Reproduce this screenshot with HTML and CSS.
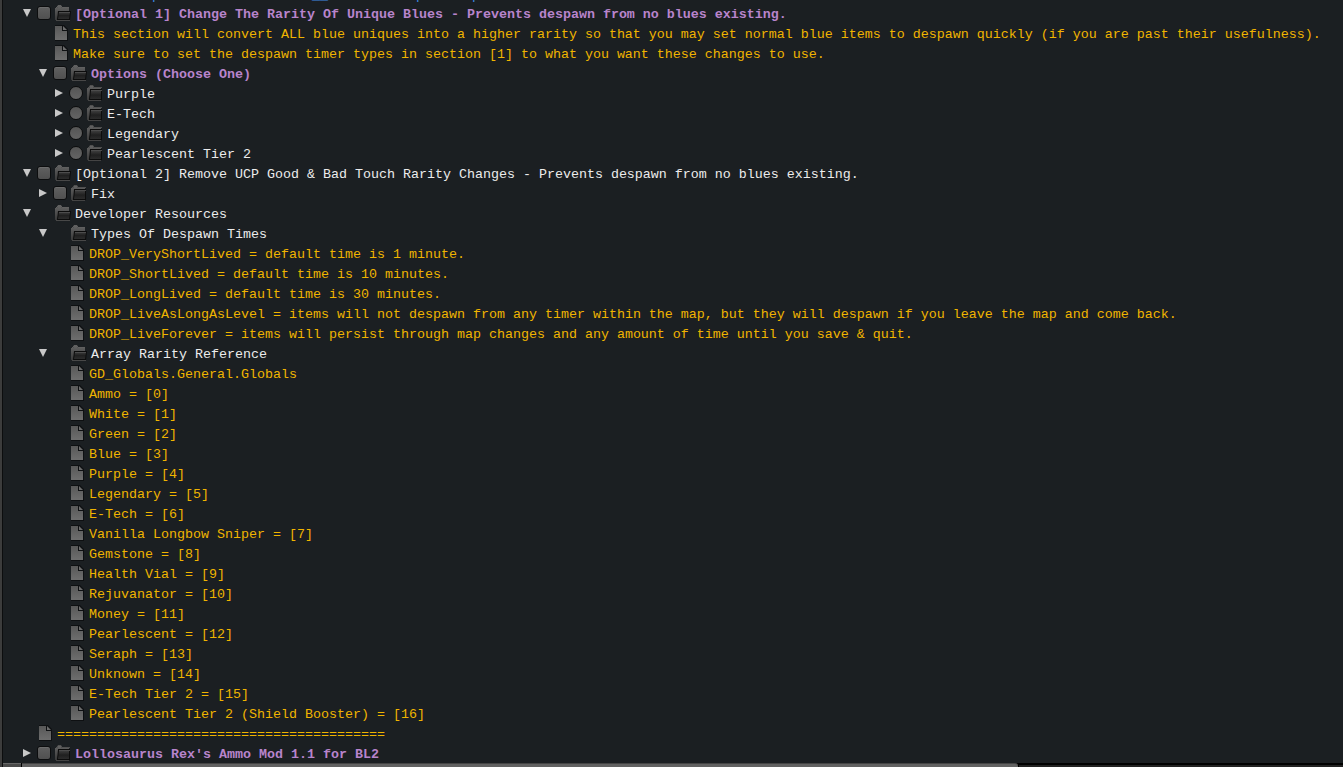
FILE: index.html
```html
<!DOCTYPE html>
<html lang="en">
<head>
<meta charset="utf-8">
<title>Mod tree</title>
<link rel="stylesheet" href="styles.css">
</head>
<body>
<svg class="defs" aria-hidden="true">
  <defs>
    <linearGradient id="paper" x1="0" y1="0" x2="0" y2="1"><stop offset="0" stop-color="#585858"/><stop offset="1" stop-color="#6e6e6e"/></linearGradient>
    <linearGradient id="back" x1="0" y1="0" x2="0" y2="1"><stop offset="0" stop-color="#626262"/><stop offset="1" stop-color="#3a3a3a"/></linearGradient>
    <linearGradient id="front" x1="0" y1="0" x2="0" y2="1"><stop offset="0" stop-color="#3c3c3c"/><stop offset="0.5" stop-color="#202020"/><stop offset="1" stop-color="#2c2c2c"/></linearGradient>
    <symbol id="doc" viewBox="0 0 16 16">
      <path d="M0 0h9l4 4v12H0z" fill="#0e1012"/>
      <path d="M0 1h7v5h5v9H0z" fill="url(#paper)"/>
      <path d="M8 1l4 4H8z" fill="#6c6c6c"/>
    </symbol>
    <symbol id="folder-open" viewBox="0 0 16 16">
      <path d="M0 15V3h2l1-2h3l1 2h7v4H4L2 15z" fill="url(#back)"/>
      <path d="M1 2.500h1l1-2h3l1 2h7" fill="none" stroke="#606060"/>
      <path d="M3 6h13l-1 9H2z" fill="#0c0c0c"/>
      <path d="M4 7h11l-1 7H3z" fill="url(#front)"/>
      <path d="M4 7.500h11" stroke="#4c4c4c"/>
      <path d="M1 15.500h14" stroke="#484848"/>
    </symbol>
    <symbol id="folder-shut" viewBox="0 0 16 16">
      <path d="M0 15V3h2l1-2h3l1 2h7v2H4L2 15z" fill="url(#back)"/>
      <path d="M1 2.500h1l1-2h3l1 2h8" fill="none" stroke="#505050"/>
      <path d="M3 4h12v11H2z" fill="#0c0c0c"/>
      <path d="M4 6h10v8H3z" fill="url(#front)"/>
      <path d="M4 5.500h11" stroke="#4c4c4c"/>
      <path d="M1 15.500h13" stroke="#444"/>
    </symbol>
  </defs>
</svg>
<main class="pane">
  <ul class="tree" id="tree"></ul>
  <div class="scroll"><span class="corner"></span><span class="thumb"></span><span class="track"></span></div>
</main>
<script src="tree.js"></script>
</body>
</html>
```
FILE: styles.css
```css
* { box-sizing: border-box; }
body {
  margin: 0;
  background: #1b1f22;
  color: #ececec;
  font-family: "Liberation Mono", "Courier New", monospace;
  font-size: 10pt;
  overflow: hidden;
}
.defs { position: absolute; width: 0; height: 0; }
.pane {
  height: 100vh;
  overflow: hidden;
  display: flex;
  flex-direction: column;
  border-left: 2px solid #3c3c3c;
  box-shadow: inset 1px 0 #0c0d0e;
}
.tree {
  flex: 1;
  min-height: 0;
  overflow: hidden;
  display: flex;
  flex-direction: column;
  margin: 0;
  padding: 3px 0 0 18px;
  list-style: none;
}
.row {
  display: flex;
  align-items: center;
  flex: none;
  height: 20px;
  white-space: pre;
}
/* the row scrolled off the top: only its descenders show */
.past { margin: -19px 0 -1px; color: #3f8ae0; }
.past .label { padding-left: 132px; }
.d1 { padding-left: 16px; }
.d2 { padding-left: 32px; }
.arrow {
  width: 13px;
  height: 20px;
  padding: 0;
  border: 0;
  background: none;
  display: flex;
  align-items: center;
  justify-content: center;
}
.arrow svg { width: 8px; height: 8px; fill: #c8c8c8; }
.check {
  appearance: none;
  width: 14px;
  height: 14px;
  margin: 0 4px;
  border: 1px solid #0c0d0e;
  border-radius: 3px;
  background: linear-gradient(#606060, #505050);
  box-shadow: inset 0 1px #6c6c6c;
}
.check[type="radio"] { border-radius: 50%; background: linear-gradient(#555, #646464); box-shadow: none; }
.nocheck { width: 22px; }
.icon { width: 16px; height: 16px; margin-right: 4px; flex: none; }
.label { line-height: 20px; padding-top: 4px; }
.mod .label { color: #b884cc; font-weight: bold; }
.note .label { color: #f0b400; }
.note .icon { margin-right: 0; }
.note .gap { width: 19px; }
.note .label { padding-left: 2px; }
.scroll { display: flex; height: 4px; margin-left: 1px; background: #000; }
.corner { width: 18px; background: #4a4a4a; border-top: 1px solid #666; margin-right: 1px; }
.thumb { width: calc(74% + 4px); background: #626262; border-top: 1px solid #444; border-radius: 0 3px 0 0; }
.track { flex: 1; margin: 2px 0 0 1px; background: #222; }
```
FILE: tree.js
```js
const rows = [
  [0, "open", "checkbox", "mod", "[Optional 1] Change The Rarity Of Unique Blues - Prevents despawn from no blues existing."],
  [1, "", "", "note", "This section will convert ALL blue uniques into a higher rarity so that you may set normal blue items to despawn quickly (if you are past their usefulness)."],
  [1, "", "", "note", "Make sure to set the despawn timer types in section [1] to what you want these changes to use."],
  [1, "open", "checkbox", "mod", "Options (Choose One)"],
  [2, "shut", "radio", "", "Purple"],
  [2, "shut", "radio", "", "E-Tech"],
  [2, "shut", "radio", "", "Legendary"],
  [2, "shut", "radio", "", "Pearlescent Tier 2"],
  [0, "open", "checkbox", "", "[Optional 2] Remove UCP Good & Bad Touch Rarity Changes - Prevents despawn from no blues existing."],
  [1, "shut", "checkbox", "", "Fix"],
  [0, "open", "", "", "Developer Resources"],
  [1, "open", "", "", "Types Of Despawn Times"],
  [2, "", "", "note", "DROP_VeryShortLived = default time is 1 minute."],
  [2, "", "", "note", "DROP_ShortLived = default time is 10 minutes."],
  [2, "", "", "note", "DROP_LongLived = default time is 30 minutes."],
  [2, "", "", "note", "DROP_LiveAsLongAsLevel = items will not despawn from any timer within the map, but they will despawn if you leave the map and come back."],
  [2, "", "", "note", "DROP_LiveForever = items will persist through map changes and any amount of time until you save & quit."],
  [1, "open", "", "", "Array Rarity Reference"],
  ...["GD_Globals.General.Globals", "Ammo = [0]", "White = [1]", "Green = [2]", "Blue = [3]", "Purple = [4]", "Legendary = [5]", "E-Tech = [6]", "Vanilla Longbow Sniper = [7]", "Gemstone = [8]", "Health Vial = [9]", "Rejuvanator = [10]", "Money = [11]", "Pearlescent = [12]", "Seraph = [13]", "Unknown = [14]", "E-Tech Tier 2 = [15]", "Pearlescent Tier 2 (Shield Booster) = [16]"].map(t => [2, "", "", "note", t]),
  [0, "", "", "note", "=".repeat(41)],
  [0, "shut", "checkbox", "mod", "Lollosaurus Rex's Ammo Mod 1.1 for BL2"],
];
const arrows = { open: "M0 0h8L4 8z", shut: "M0 0l8 4L0 8z" };
const tree = document.getElementById("tree");

const past = document.createElement("li");
past.className = "row past";
past.innerHTML = '<span class="label"></span>';
past.firstChild.textContent = "p" + " ".repeat(19) + "__" + " ".repeat(11) + "p" + " ".repeat(6) + "p";
tree.append(past);

rows.forEach(([depth, state, control, kind, text], i) => {
  const li = document.createElement("li");
  li.className = `row d${depth} ${kind}`;
  const label = document.createElement("label");
  label.className = "label";
  label.textContent = text;
  let lead = '<span class="gap"></span>';
  if (state) {
    lead = `<button class="arrow" aria-label="Toggle"><svg viewBox="0 0 8 8"><path d="${arrows[state]}"/></svg></button>`;
    lead += control ? `<input class="check" type="${control}" name="${control === "radio" ? "tier" : "item" + i}" id="c${i}">` : '<span class="nocheck"></span>';
    if (control) label.htmlFor = "c" + i;
  }
  const icon = kind === "note" ? "doc" : "folder-" + state;
  li.innerHTML = `${lead}<svg class="icon" aria-hidden="true"><use href="#${icon}"/></svg>`;
  li.append(label);
  tree.append(li);
});
```
